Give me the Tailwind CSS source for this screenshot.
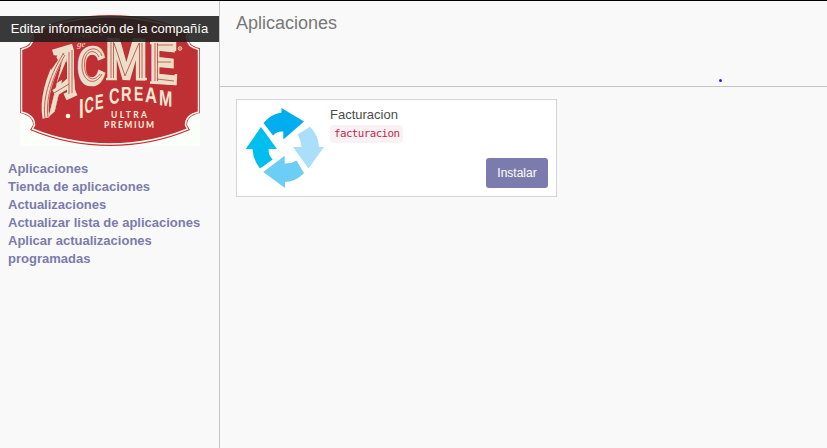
<!DOCTYPE html>
<html lang="es">
<head>
<meta charset="utf-8">
<title>Aplicaciones</title>
<script src="https://cdn.jsdelivr.net/npm/@tailwindcss/browser@4"></script>
</head>
<body class="h-[448px] w-[827px] overflow-hidden bg-[#f9f9f9] font-['Liberation_Sans',Arial,sans-serif] text-[13px] text-[#4c4c4c]">
<div class="flex h-full border-t border-black">
  <aside class="relative w-[220px] shrink-0 border-r border-[#c5c5c5] pt-[14px]">
    <svg class="ml-5 block h-[131px] w-[180px]" viewBox="20 15 180 131">
      <rect x="20" y="15" width="180" height="131" fill="#fbfffa"/>
      <path d="M30 32 Q68 15 110 15 Q152 15 190 32 L188 36 Q188 46 200 48 V113 Q187 116 187 125 L190 130 Q152 146 110 146 Q68 146 30 130 L33 125 Q33 116 20 113 V48 Q32 46 32 36Z" fill="#be3034"/>
      <path d="M32 33 Q69 17 110 17 Q151 17 188 33 L186.500 37 Q187 47 198.500 49.500 V112 Q185.500 115 185.500 125 L187.500 129 Q151 144 110 144 Q69 144 32.500 129 L34.500 125 Q34.500 115 21.500 112 V49.500 Q33 47 33.500 37Z" fill="none" stroke="#fff8ed" stroke-width="1.500"/>
      <g fill="#efe5d0" font-family="Liberation Serif, serif" font-style="italic">
        <text x="73" y="38" font-size="6" letter-spacing=".5">TOWN</text>
        <text x="77" y="47" font-size="9">ge</text>
      </g>
      <circle cx="65" cy="35" r="1" fill="#efe5d0"/><circle cx="101" cy="35" r="1" fill="#efe5d0"/>
      <path d="M107 40 H114 M106 79 H117 M136 79 H147 M150 43 H175 V51 M150 82.500 L175.500 84 L176 74" fill="none" stroke="#eadfc8" stroke-width="2.500"/>
      <g font-family="Liberation Sans, Arial, sans-serif" font-weight="700" font-size="100" fill="#eadfc8" stroke="#eadfc8" stroke-width="6">
        <text transform="matrix(.39 -.34 -.09 .83 48 117)" stroke-width="1">A</text>
        <text transform="matrix(.38 -.02 0 .53 77.500 85)">C</text>
        <text transform="matrix(.50 .01 0 .56 105.500 78)">M</text>
        <text transform="matrix(.39 .04 0 .57 150 81)">E</text>
      </g>
      <path d="M46 118 C42 96 52 72 62 54 M53 53 L73 47 M70.500 50 V95 M65 97 L76 92 M54 93 L70 84" fill="none" stroke="#eadfc8" stroke-width="7"/>
      <path d="M57 83 L66 61 V77Z" fill="#be3034"/>
      <path d="M45 118 C42 96 52 72 63 54 M48 117 C45 96 55 72 65 55 M69 52 V94 M72 50 V93 M54 93 L69 84 M102 56 C98 44 82 47 82 65 C82 82 95 87 102 74 M99 57 C95 48 84 50 84.500 65 C84.500 79 94 83 100 74 M111 42 V78 M113.500 42 V78 M114 43 L125 76 L139 43 M139.500 43 V78 M142 43 V78 M155 43 V81 M157.500 43 V81 M157 45 H173 M157 62 H171 M157 79 L174 81" fill="none" stroke="#c33f3d" stroke-width=".8"/>
      <path d="M50 57 L55 55 L58 60 L51 70Z" fill="#be3034"/>
      <circle cx="68" cy="116" r="2.300" fill="#fff4df"/>
      <circle cx="180" cy="48.500" r="1.900" fill="#dc8177" stroke="#f4d5bd" stroke-width=".7"/>
      <g font-family="Liberation Sans, Arial, sans-serif" font-weight="700" font-size="20" fill="#f2e7d2">
        <text transform="matrix(.85 -.15 0 1.380 79 118.500)">I</text>
        <text transform="matrix(.65 -.18 0 1.120 84.500 114)">C</text>
        <text transform="matrix(.65 -.13 0 1.050 95 110)">E</text>
        <text transform="matrix(.73 -.06 0 1.100 109 104)">C</text>
        <text transform="matrix(.73 -.02 0 1 121 101)">R</text>
        <text transform="matrix(.70 .02 0 1 134 100.500)">E</text>
        <text transform="matrix(.83 .08 0 1.080 145 102)">A</text>
        <text transform="matrix(.80 .12 0 1.100 159 105)">M</text>
      </g>
      <g fill="#fff0df" font-family="Lato, sans-serif" font-weight="700" font-size="8.500">
        <text x="111" y="117.500" textLength="36">ULTRA</text>
        <text x="104" y="127.500" textLength="50">PREMIUM</text>
      </g>
    </svg>
    <div class="absolute left-0 top-[15px] flex h-[26px] w-[219px] items-center justify-center bg-[#1e1e1e]/88 text-white"><span class="whitespace-nowrap">Editar información de la compañía</span></div>
    <nav class="mt-[14px] flex flex-col pl-2 font-bold leading-[18px] text-[#7c7bad]">
      <a>Aplicaciones</a><a>Tienda de aplicaciones</a><a>Actualizaciones</a><a>Actualizar lista de aplicaciones</a><a>Aplicar actualizaciones<br>programadas</a>
    </nav>
  </aside>
  <main class="flex-1">
    <header class="relative h-[86px] border-b border-[#c5c5c5] px-4 pt-2">
      <h1 class="text-[18px] leading-7 text-[#777]">Aplicaciones</h1>
      <span class="absolute left-[499px] top-[78px] size-[3px] rounded-full bg-[#2020ff]"></span>
    </header>
    <section class="ml-4 mt-3 flex h-[98px] w-[321px] border border-[#d4d4d4] bg-white">
      <svg class="ml-[8px] mt-[7px] h-[82px] w-[80px] shrink-0" viewBox="245 107 80 82">
        <path fill="#00aeef" d="M263.500 123 Q271 114 281.500 112.500 V108 L304 121.500 L283.300 139.500 V131.500 Q277 131 273 135.500Z"/>
        <path fill="#a9dff8" d="M297.700 134.500 L310 126.700 Q318.500 135 319 147 H324 L308.500 168.500 L293 147 H301.500 Q301 141 297.700 134.500Z"/>
        <path fill="#6ccdf5" d="M304 173.300 Q296 181.500 285 182 V188 L263.300 172 L284.700 155.700 V163.500 Q291 164 296.500 160.500Z"/>
        <path fill="#00bfef" d="M260 168.500 Q253 160 252.500 149 H245.700 L261 127 L277 149 H268.700 Q268 155 272.700 159.500Z"/>
      </svg>
      <div class="ml-[5px] flex flex-1 flex-col items-start pr-2 pt-[6px]">
        <h2 class="leading-[18px]">Facturacion</h2>
        <code class="mt-px h-[18px] w-[73px] rounded bg-[#f9f2f4] pl-1 font-['DejaVu_Sans_Mono',monospace] text-[10.8px] leading-[18px] tracking-[-0.55px] text-[#c7254e]">facturacion</code>
        <button class="mt-[15px] h-[30px] w-[62px] self-end rounded-[3px] bg-[#7c7bad] text-[12px] text-white">Instalar</button>
      </div>
    </section>
  </main>
</div>
</body>
</html>
